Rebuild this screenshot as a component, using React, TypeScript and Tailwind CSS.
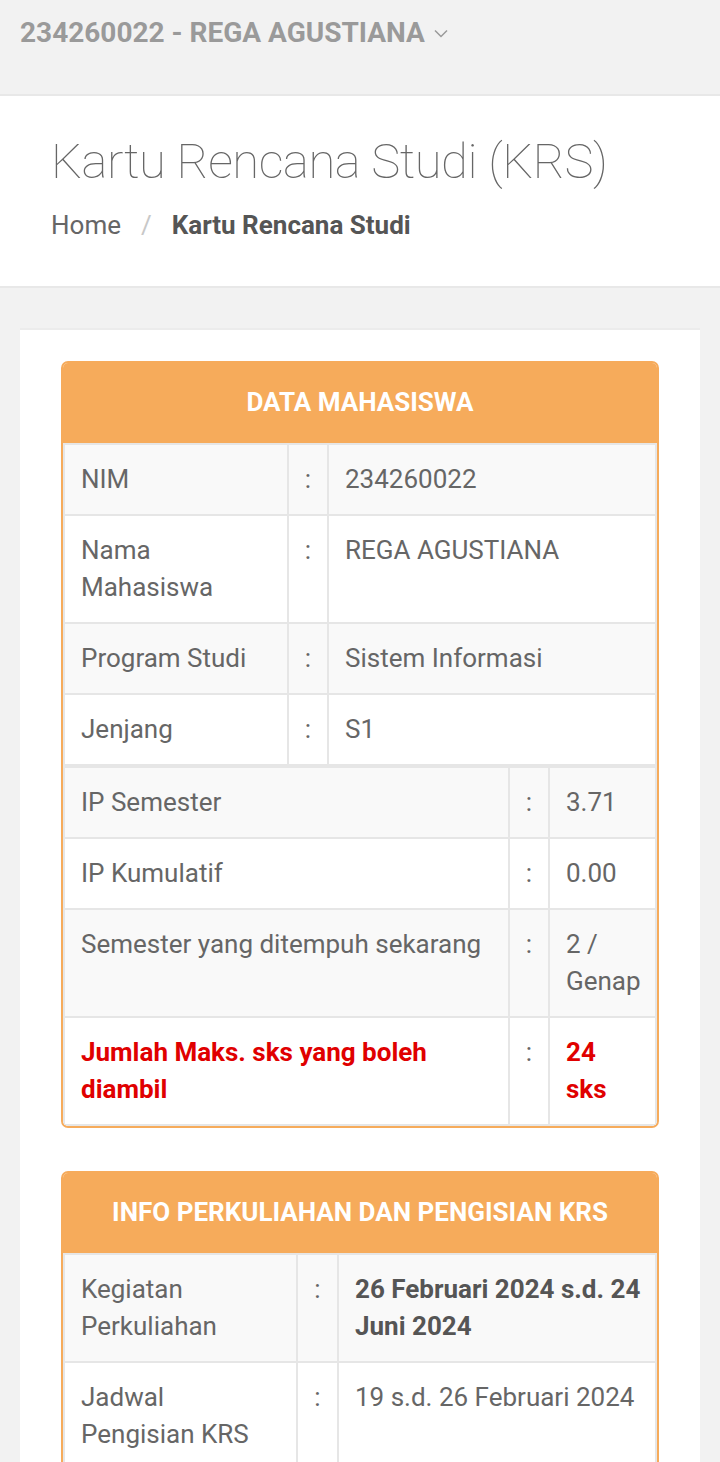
import React from 'react';

type Row = { label: React.ReactNode; value: React.ReactNode; red?: boolean; bold?: boolean };

const Panel: React.FC<{ title: string; children: React.ReactNode }> = ({ title, children }) => (
  <div className="border-2 border-[#f6ab5b] rounded-[7px] overflow-hidden bg-white">
    <div className="h-[80px] bg-[#f6ab5b] flex items-center justify-center text-white font-bold text-[26px] pb-[2px]">
      {title}
    </div>
    {children}
  </div>
);

const InfoTable: React.FC<{ rows: Row[]; cols: [string, string, string] }> = ({ rows, cols }) => (
  <table className="w-full border-collapse table-fixed text-[26px] leading-[37px] text-[#666]">
    <colgroup>
      <col className={cols[0]} />
      <col className={cols[1]} />
      <col className={cols[2]} />
    </colgroup>
    <tbody>
      {rows.map((r, i) => (
        <tr key={i} className={i % 2 === 0 ? 'bg-[#f9f9f9]' : 'bg-white'}>
          <td className={`border-2 border-[#e6e6e6] pl-[16px] pr-[10px] py-[16px] align-top ${r.red ? 'text-[#e00000] font-bold' : ''}`}>
            {r.label}
          </td>
          <td className="border-2 border-[#e6e6e6] text-center py-[16px] align-top">:</td>
          <td
            className={`border-2 border-[#e6e6e6] pl-[16px] pr-[10px] py-[16px] align-top ${
              r.red ? 'text-[#e00000] font-bold' : r.bold ? 'font-bold text-[#555]' : ''
            }`}
          >
            {r.value}
          </td>
        </tr>
      ))}
    </tbody>
  </table>
);

export default function App() {
  return (
    <div className="min-h-[1462px] bg-[#f2f2f2] font-['Roboto',sans-serif]">
      {/* top bar */}
      <div className="h-[96px] border-b-2 border-[#e8e8e8] px-5 pt-[16px]">
        <div className="flex items-center gap-[7px] text-[#9a9a9a] font-bold text-[28px] leading-[34px]">
          <span>234260022 - REGA AGUSTIANA</span>
          <svg width="18" height="18" viewBox="0 0 18 18" fill="none" stroke="#9a9a9a" strokeWidth="1.5">
            <path d="M3 6.5l6 6 6-6" />
          </svg>
        </div>
      </div>

      {/* page header */}
      <div className="bg-white h-[192px] border-b-2 border-[#e8e8e8] px-[51px] pt-[36px]">
        <h1 className="font-thin text-[49px] leading-[60px] text-[#666] tracking-[-0.5px]">Kartu Rencana Studi (KRS)</h1>
        <div className="mt-[16px] flex items-center text-[26px] leading-[34px]">
          <span className="text-[#666]">Home</span>
          <span className="text-[#c8c8c8] px-[20px]">/</span>
          <span className="text-[#555] font-bold">Kartu Rencana Studi</span>
        </div>
      </div>

      {/* content */}
      <div className="pt-[40px] px-5">
        <div className="bg-white border-t-2 border-[#ececec] px-[41px] pt-[31px] pb-10 flex flex-col gap-[43px]">
          <Panel title="DATA MAHASISWA">
            <InfoTable
              cols={['w-[224px]', 'w-[40px]', 'w-auto']}
              rows={[
                { label: 'NIM', value: '234260022' },
                { label: <>Nama<br />Mahasiswa</>, value: 'REGA AGUSTIANA' },
                { label: 'Program Studi', value: 'Sistem Informasi' },
                { label: 'Jenjang', value: 'S1' },
              ]}
            />
            <InfoTable
              cols={['w-[445px]', 'w-[40px]', 'w-auto']}
              rows={[
                { label: 'IP Semester', value: '3.71' },
                { label: 'IP Kumulatif', value: '0.00' },
                { label: 'Semester yang ditempuh sekarang', value: <>2 /<br />Genap</> },
                { label: <>Jumlah Maks. sks yang boleh<br />diambil</>, value: <>24<br />sks</>, red: true },
              ]}
            />
          </Panel>

          <Panel title="INFO PERKULIAHAN DAN PENGISIAN KRS">
            <InfoTable
              cols={['w-[233px]', 'w-[41px]', 'w-auto']}
              rows={[
                { label: <>Kegiatan<br />Perkuliahan</>, value: <>26 Februari 2024 s.d. 24<br />Juni 2024</>, bold: true },
                { label: <>Jadwal<br />Pengisian KRS</>, value: '19 s.d. 26 Februari 2024' },
              ]}
            />
          </Panel>
        </div>
      </div>
    </div>
  );
}
